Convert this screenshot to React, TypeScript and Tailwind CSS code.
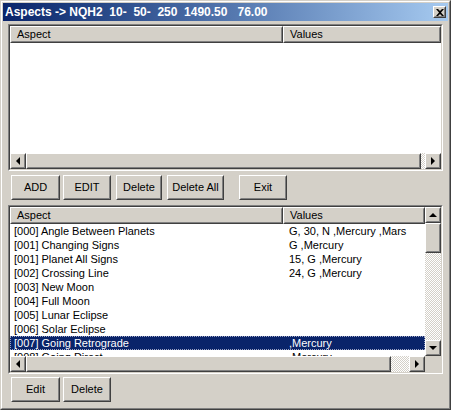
import React from 'react'

const font = { fontFamily: '"Liberation Sans", Arial, sans-serif' }

const rows = [
  { aspect: '[000] Angle Between Planets', values: 'G, 30, N ,Mercury ,Mars' },
  { aspect: '[001] Changing Signs', values: 'G ,Mercury' },
  { aspect: '[001] Planet All Signs', values: '15, G ,Mercury' },
  { aspect: '[002] Crossing Line', values: '24, G ,Mercury' },
  { aspect: '[003] New Moon', values: '' },
  { aspect: '[004] Full Moon', values: '' },
  { aspect: '[005] Lunar Eclipse', values: '' },
  { aspect: '[006] Solar Eclipse', values: '' },
  { aspect: '[007] Going Retrograde', values: ',Mercury', selected: true },
  { aspect: '[008] Going Direct', values: ',Mercury' },
]

// raised 3d box (buttons, scroll arrows, header cells)
function Raised({ className = '', children }: { className?: string; children?: React.ReactNode }) {
  return (
    <div className={`border border-t-white border-l-white border-r-[#404040] border-b-[#404040] ${className}`}>
      <div className="h-full w-full border border-t-[#d4d0c8] border-l-[#d4d0c8] border-r-[#808080] border-b-[#808080] flex items-center justify-center">
        {children}
      </div>
    </div>
  )
}

function Btn({ label, className = '' }: { label: string; className?: string }) {
  return (
    <Raised className={`h-[25px] bg-[#d4d0c8] text-[11px] text-black ${className}`}>
      <span className="leading-none">{label}</span>
    </Raised>
  )
}

function Arrow({ dir }: { dir: 'left' | 'right' | 'up' | 'down' }) {
  const pts =
    dir === 'left' ? '5,1 5,9 1,5' :
    dir === 'right' ? '1,1 1,9 5,5' :
    dir === 'up' ? '1,5 9,5 5,1' : '1,1 9,1 5,5'
  const w = dir === 'left' || dir === 'right' ? 6 : 10
  const h = dir === 'left' || dir === 'right' ? 10 : 6
  return (
    <Raised className="w-[16px] h-[16px] bg-[#d4d0c8] shrink-0">
      <svg width={w} height={h} viewBox={`0 0 ${w} ${h}`}>
        <polygon points={pts} fill="black" />
      </svg>
    </Raised>
  )
}

const checker = 'bg-[repeating-conic-gradient(#d4d0c8_0%_25%,#ffffff_0%_50%)] bg-[length:2px_2px]'

function HScroll({ thumb, track }: { thumb: number; track: number }) {
  return (
    <div className="flex h-[16px]">
      <Arrow dir="left" />
      <Raised className="h-[16px] bg-[#d4d0c8]" >
        <div style={{ width: thumb - 4 }} />
      </Raised>
      <div className={`h-[16px] ${checker}`} style={{ width: track }} />
      <Arrow dir="right" />
    </div>
  )
}

function Header() {
  return (
    <div className="flex h-[17px] text-[11px] text-black shrink-0">
      <Raised className="w-[273px] bg-[#d4d0c8]">
        <span className="w-full pl-[5px] leading-none">Aspect</span>
      </Raised>
      <Raised className="flex-1 bg-[#d4d0c8]">
        <span className="w-full pl-[5px] leading-none">Values</span>
      </Raised>
    </div>
  )
}

function Sunken({ className = '', children }: { className?: string; children?: React.ReactNode }) {
  return (
    <div className={`border border-t-[#808080] border-l-[#808080] border-r-white border-b-white ${className}`}>
      <div className="h-full w-full border border-t-[#404040] border-l-[#404040] border-r-[#d4d0c8] border-b-[#d4d0c8] bg-white flex flex-col">
        {children}
      </div>
    </div>
  )
}

export default function App() {
  return (
    <div style={font} className="w-[451px] h-[410px] bg-[#d4d0c8] border border-t-[#d4d0c8] border-l-[#d4d0c8] border-r-[#404040] border-b-[#404040] select-none">
      <div className="h-full w-full border border-t-white border-l-white border-r-[#808080] border-b-[#808080] p-[1px] flex flex-col">
        {/* title bar */}
        <div className="h-[18px] bg-gradient-to-r from-[#0a246a] to-[#a6caf0] flex items-center justify-between pl-[2px] pr-[2px] shrink-0">
          <span className="text-white font-bold text-[12px] leading-none whitespace-pre">
            {'Aspects -> NQH2  10-  50-  250  1490.50   76.00'}
          </span>
          <Raised className="w-[13px] h-[12px] bg-[#d4d0c8]">
            <svg width="8" height="7" viewBox="0 0 8 7">
              <path d="M0 0 L2 0 L4 2 L6 0 L8 0 L5 3.5 L8 7 L6 7 L4 5 L2 7 L0 7 L3 3.5 Z" fill="black" />
            </svg>
          </Raised>
        </div>

        <div className="pl-[5px] pt-[3px]">
          {/* top list */}
          <Sunken className="w-[435px] h-[147px]">
            <Header />
            <div className="flex-1" />
            <HScroll thumb={395} track={4} />
          </Sunken>

          {/* buttons */}
          <div className="flex mt-[4px] ml-[3px]">
            <Btn label="ADD" className="w-[49px]" />
            <Btn label="EDIT" className="w-[48px] ml-[3px]" />
            <Btn label="Delete" className="w-[46px] ml-[5px]" />
            <Btn label="Delete All" className="w-[57px] ml-[5px]" />
            <Btn label="Exit" className="w-[48px] ml-[15px]" />
          </div>

          {/* bottom list */}
          <Sunken className="w-[435px] h-[169px] mt-[5px]">
            <div className="flex flex-1 min-h-0">
              <div className="flex-1 flex flex-col min-w-0">
                <Header />
                <div className="flex-1 overflow-hidden bg-white text-[11px] text-black">
                  {rows.map((r, i) => (
                    <div
                      key={i}
                      className={`flex h-[14px] items-center whitespace-nowrap ${
                        r.selected ? 'bg-[#0a246a] text-white outline-1 outline-dotted outline-[#9ca3c4] -outline-offset-1' : ''
                      }`}
                    >
                      <span className="w-[273px] pl-[4px] leading-none">{r.aspect}</span>
                      <span className="pl-[6px] leading-none">{r.values}</span>
                    </div>
                  ))}
                </div>
              </div>
              <div className="w-[16px] flex flex-col">
                <Arrow dir="up" />
                <Raised className="h-[30px] bg-[#d4d0c8]" />
                <div className={`flex-1 ${checker}`} />
                <Arrow dir="down" />
              </div>
            </div>
            <div className="flex">
              <HScroll thumb={365} track={18} />
              <div className="w-[16px] h-[16px] bg-[#d4d0c8]" />
            </div>
          </Sunken>

          {/* bottom buttons */}
          <div className="flex mt-[3px] ml-[3px]">
            <Btn label="Edit" className="w-[49px]" />
            <Btn label="Delete" className="w-[48px] ml-[3px]" />
          </div>
        </div>
      </div>
    </div>
  )
}
